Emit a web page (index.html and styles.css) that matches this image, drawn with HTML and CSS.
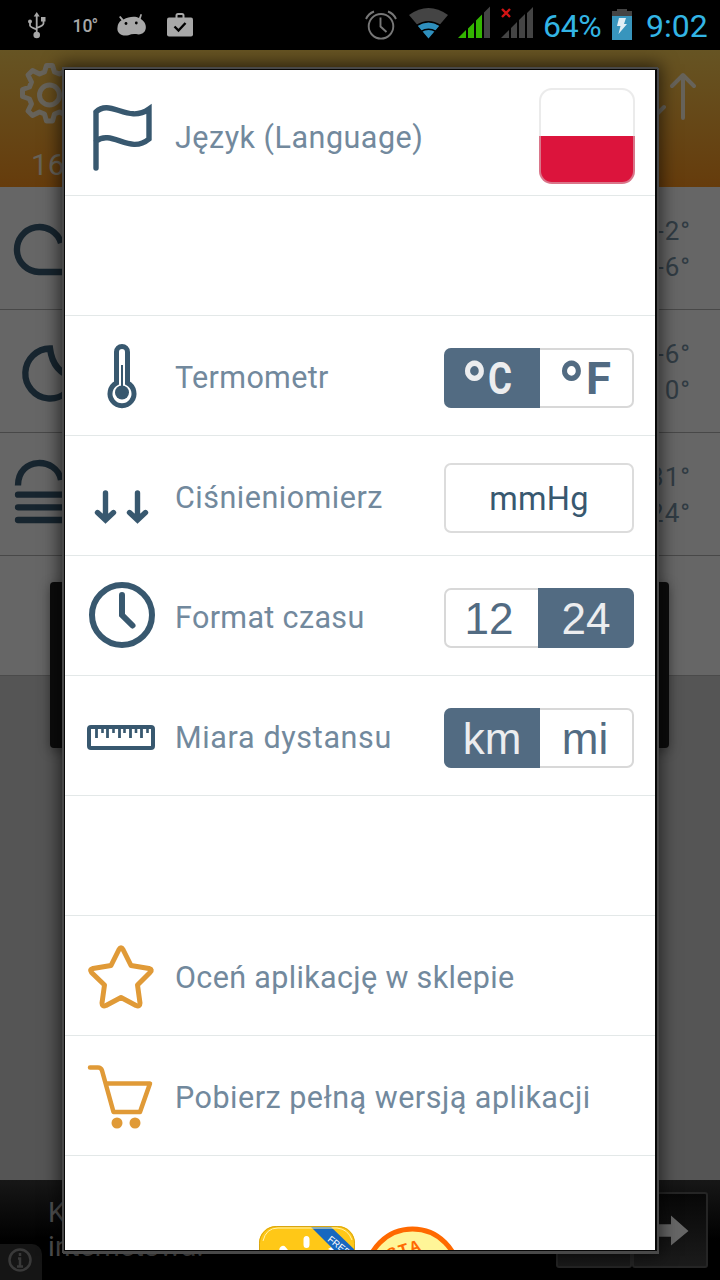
FILE: index.html
```html
<!DOCTYPE html>
<html lang="pl">
<head>
<meta charset="utf-8">
<title>Ustawienia</title>
<link rel="stylesheet" href="styles.css">
</head>
<body>
<div class="screen">
  <header class="status">
    <svg class="status-left" viewBox="0 0 220 50">
      <g fill="none" stroke="#a8a8a8" stroke-width="1.8">
        <path d="M36.700 16V35M30 22v3.500q0 1.500 6.700 4M43.500 20v3.500q0 2-6.800 4.500"/>
      </g>
      <g fill="#a8a8a8">
        <path d="M36.700 12l3 4.500h-6z"/><circle cx="36.700" cy="35" r="3.300"/><circle cx="30" cy="21.500" r="2"/><rect x="41" y="17" width="4.500" height="4.500"/>
        <text x="72.500" y="31.700" class="small-temp">10<tspan dx="-1">°</tspan></text>
        <path d="M119 17l1.500-1 3 3.500c5-3 12-3.500 15.500-1.500l1.500-4 1.500.6-1.300 4.500c7 3.500 7.500 15-2.200 15.500-4-.8-7-.6-10 .6-7 1.300-12-2-11-8 .3-3 1.500-5.500 4-7z"/>
        <rect x="167" y="17.500" width="26" height="19" rx="2"/>
      </g>
      <circle cx="126" cy="23.500" r="1.400"/><circle cx="136.300" cy="23" r="1.400"/>
      <path d="M176.500 18v-2.500q0-1.500 1.500-1.500h4q1.500 0 1.500 1.500V18" fill="none" stroke="#a8a8a8" stroke-width="2"/>
      <path d="M174.500 26.500l4 4 7-7.500" fill="none" stroke="#000" stroke-width="2.400"/>
    </svg>
    <div class="status-right">
      <svg class="signals" viewBox="360 0 180 50">
        <g fill="none" stroke="#777" stroke-width="1.900">
          <circle cx="381" cy="26.300" r="12.300"/><path d="M380.500 17.500v9l6 5.500M366 19q2.500-5.500 8-7.500M396 19q-2.500-5.500-8-7.500"/>
        </g>
        <path d="M409 15q19.500-14 39 0L428.500 38z" fill="#444"/>
        <path d="M417.500 25.500q11-7 22 0L428.500 38.500z" fill="#2e8fbd"/>
        <path d="M416.500 25.500q12-7.500 24 0M421 31.500q7.500-4.500 15 0" fill="none" stroke="#000" stroke-width="1.500"/>
        <g fill="#33b500"><path d="M458 38l8-8v8zM468 38V28.500l6-6V38zM476 38V20.500l6-6V38z"/></g>
        <g fill="#444"><path d="M484 38V12.500l6-6V38zM501 38l8-8v8zM511 38V28l6-6v16zM519 38V20l6-6v24zM527 38V13l6-6v31z"/></g>
        <path d="M502 9l8 8M510 9l-8 8" stroke="#d31414" stroke-width="2.400"/>
      </svg>
      <span class="battery-text">64%</span>
      <svg class="battery" viewBox="0 0 20 50">
        <path d="M0 11h5V9h10v2h5v5H0z" fill="#444"/><path d="M0 16h20v24H0z" fill="#3895bd"/>
        <path d="M7 18h7l-2 6h3L6.500 34l2-8H5z" fill="#e1eef4"/>
      </svg>
      <span class="clock">9:02</span>
    </div>
  </header>

  <main class="weather">
    <div class="toolbar">
      <div class="today">
        <svg class="gear" viewBox="20 61 61 64" fill="none" stroke="#67635a" stroke-width="5" stroke-linejoin="round">
          <circle cx="50.500" cy="94" r="10"/>
          <path d="M45.500 71l2-6.500h6l2 6.500 5 2 7-3.500 4.500 4.500-3.500 7 2 5 7 2.500v7l-7 2.500-2 5 3.500 7-4.500 4.500-7-3.500-5 2-2 7h-6l-2-7-5-2-7 3.500-4.500-4.500 3.500-7-2-5-7-2.500v-7l7-2.500 2-5-3.500-7 4.500-4.500 7 3.500z"/>
        </svg>
        <span class="hour">16</span>
      </div>
      <svg class="arrows" viewBox="640 70 60 60" fill="none" stroke="#67635a" stroke-width="4" stroke-linecap="round" stroke-linejoin="round"><path d="M683 118V76M672 86l11-11 11 11M653 76v42M642 107l11 11 11-11"/></svg>
    </div>
    <div class="day">
      <svg viewBox="0 186 90 122"><path d="M61 242A22.500 22.500 0 1 0 39 271H80"/></svg>
      <div class="temps"><span>-2°</span><span>-6°</span></div>
    </div>
    <div class="day">
      <svg viewBox="0 310 90 122"><path d="M50 348.500a25 25 0 1 0 25 29Q53 373 50 348.500z"/></svg>
      <div class="temps"><span>-6°</span><span>0°</span></div>
    </div>
    <div class="day">
      <svg viewBox="0 433 90 122"><path d="M18 485.500C18 456 57 457 61 480"/><path d="M18 494.700H80M18 507.300H80M18 520H80" stroke-linecap="round"/></svg>
      <div class="temps"><span>-31°</span><span>-24°</span></div>
    </div>
    <div class="blank"></div>
    <div class="remainder"></div>
    <footer class="ad">
      <div class="ad-text">K<br>internetowa!</div>
      <div class="ad-buttons"><span></span><span><svg viewBox="0 0 74 74"><path d="M8 31h30v-9l18 16-18 15v-9H8z" fill="#666"/></svg></span></div>
      <div class="info"><svg viewBox="0 0 26 26" fill="none" stroke="#393939" stroke-width="2.500"><circle cx="13" cy="13" r="10.500"/><path d="M13 6v3M11 11.500h2V19M10 19.500h6"/></svg></div>
    </footer>
  </main>

  <div class="backdrop-box"></div>

  <section class="dialog">
    <div class="row first">
      <svg class="icon" viewBox="65 70 110 125"><path d="M96 168V112M96 112C110 98 128 124 149 109V139C130 155 112 129 96 141" fill="none" stroke="#38586f" stroke-width="5.400" stroke-linecap="round"/></svg>
      <span class="label">Język (Language)</span><div class="flag"></div>
    </div>
    <div class="row"></div>
    <div class="row">
      <svg class="icon" viewBox="65 316 110 119"><path d="M116.500 383V352a5.500 5.500 0 0 1 11 0V383A12 12 0 1 1 116.500 383z" fill="none" stroke="#38586f" stroke-width="5"/><circle cx="122" cy="392.500" r="7" fill="#38586f"/><path d="M122 365v22" stroke="#38586f" stroke-width="2"/></svg>
      <span class="label tight">Termometr</span>
      <div class="toggle"><span class="on"><svg viewBox="0 0 96 60"><text class="deg" x="16.500" y="68" textLength="28" lengthAdjust="spacingAndGlyphs">°</text><text class="unit" x="44" y="46" textLength="24" lengthAdjust="spacingAndGlyphs">C</text></svg></span><span><svg viewBox="0 0 94 60"><text class="deg" x="17.500" y="68" textLength="28" lengthAdjust="spacingAndGlyphs">°</text><text class="unit" x="46" y="46" textLength="25" lengthAdjust="spacingAndGlyphs">F</text></svg></span></div>
    </div>
    <div class="row">
      <svg class="icon" viewBox="65 436 110 119"><path d="M105.500 493v27M97.500 512.500l8 7.500 8-7.500M137.500 493v27M129.500 512.500l8 7.500 8-7.500" fill="none" stroke="#38586f" stroke-width="5.400" stroke-linecap="round"/></svg>
      <span class="label">Ciśnieniomierz</span><div class="select">mmHg</div>
    </div>
    <div class="row">
      <svg class="icon" viewBox="65 556 110 119" fill="none" stroke="#38586f" stroke-width="6" stroke-linecap="round"><circle cx="122" cy="615" r="30"/><path d="M122 595v20l10.500 10.500"/></svg>
      <span class="label tight">Format czasu</span><div class="toggle"><span class="left">12</span><span class="on">24</span></div>
    </div>
    <div class="row">
      <svg class="icon" viewBox="65 676 110 119" fill="none" stroke="#38586f"><rect x="89" y="727" width="64" height="21" rx="2" stroke-width="4"/><path d="M96.500 728v10M107.500 728v10M119.500 728v10M130.500 728v10M141.500 728v10" stroke-width="2.800"/><path d="M102.500 728v5M113.500 728v5M124.500 728v5M136 728v5M147.500 728v5" stroke-width="2.600"/></svg>
      <span class="label wide">Miara dystansu</span><div class="toggle"><span class="on">km</span><span class="left">mi</span></div>
    </div>
    <div class="row"></div>
    <div class="row">
      <svg class="icon" viewBox="65 916 110 119"><path d="M119 949.500Q121 946 123 949.500L131 965.500 149 968.500Q153 969.500 150 972.500L137.500 985 140 1003Q140 1007 136 1005.500L121 997.500 106 1005.500Q102 1007 102 1003L104.500 985 91.500 972.500Q89 969.500 93 968.500L111 965.500z" fill="none" stroke="#e09a37" stroke-width="5" stroke-linejoin="round"/></svg>
      <span class="label tight">Oceń aplikację w sklepie</span>
    </div>
    <div class="row">
      <svg class="icon" viewBox="65 1036 110 119"><path d="M90 1067.500H98Q101 1067.500 102 1070.500L113.500 1112H140L150 1083.500H106.500" fill="none" stroke="#e09a37" stroke-width="4.500" stroke-linecap="round" stroke-linejoin="round"/><g fill="#e09a37"><circle cx="117" cy="1123" r="5.500"/><circle cx="135" cy="1123" r="5.500"/></g></svg>
      <span class="label">Pobierz pełną wersją aplikacji</span>
    </div>
    <div class="apps">
      <svg viewBox="259 1226 96 96">
        <defs><clipPath id="tile"><rect x="259" y="1226" width="96" height="96" rx="17"/></clipPath></defs>
        <g clip-path="url(#tile)"><rect x="259" y="1226" width="96" height="96" fill="#ffc817"/><path d="M303.500 1239.500q0-3.500 3-3.500t3 3.500v5q0 3.500-3 3.500t-3-3.500zM337 1253l-9-4 7-4z" fill="#fff"/><path d="M283 1249.500l5 6" stroke="#fff" stroke-width="7" stroke-linecap="round"/><path d="M310 1226h20l26 25v21z" fill="#1768c0"/></g>
        <rect x="259.500" y="1226.500" width="95" height="95" rx="17" fill="none" stroke="#d9a510"/><path d="M263 1241Q266 1228 278 1228H337Q348 1229 352 1240" fill="none" stroke="#fff2b0"/>
        <text class="free" transform="translate(327 1240.500) rotate(38)">FREE</text>
      </svg>
      <svg viewBox="364 1226 98 98"><circle cx="412.500" cy="1275" r="46" fill="#fff598" stroke="#ff6900" stroke-width="5"/><text class="stamp" transform="translate(389 1260) rotate(-17)">STA</text></svg>
    </div>
  </section>
</div>
</body>
</html>
```
FILE: styles.css
```css
* { box-sizing: border-box; }
body { margin: 0; font-family: Roboto, "Noto Sans", sans-serif; }
svg { display: block; }

.screen { position: relative; width: 720px; height: 1280px; overflow: hidden; background: #555; }

.status { height: 50px; display: flex; justify-content: space-between; background: #000; color: #33b5e5; }
.status-left { width: 220px; height: 50px; }
.small-temp { font-size: 17.500px; font-weight: 500; letter-spacing: 0; }
.status-right { display: flex; align-items: center; padding-right: 12px; }
.signals { width: 180px; height: 50px; }
.battery-text { width: 72px; padding: 1px 0 0 3px; font-size: 32px; letter-spacing: -.3px; }
.battery { width: 20px; height: 50px; margin-right: 14px; }
.clock { width: 62px; padding-top: 1px; font-size: 32px; letter-spacing: 0; white-space: nowrap; }

.toolbar { height: 137px; display: flex; justify-content: space-between; padding: 12px 20px 0 19px; background: linear-gradient(#665423, #663c0c); }
.today { display: flex; flex-direction: column; gap: 21px; }
.gear { width: 61px; height: 64px; }
.hour { padding-left: 12px; font-size: 30px; line-height: 36px; color: #67635a; letter-spacing: 0; }
.arrows { width: 60px; height: 60px; margin-top: 8px; }
.day { height: 123px; display: flex; justify-content: space-between; background: #666; border-bottom: 1px solid #484848; padding-right: 29px; }
.day svg { width: 90px; height: 122px; fill: none; stroke: #17252f; stroke-width: 6.300; }
.temps { display: flex; flex-direction: column; padding-top: 26px; text-align: right; color: #303b43; font-size: 26px; line-height: 36px; letter-spacing: 1px; }
.blank { height: 119px; background: #666; }
.remainder { height: 505px; background: #555; border-top: 1px solid #4b4b4b; }
.ad { position: relative; height: 101px; display: flex; justify-content: space-between; padding: 12px 12px 0 48px; background: linear-gradient(#171717, #000 60%); }
.ad-text { padding-top: 4px; font-size: 28px; line-height: 34px; letter-spacing: .1px; color: #505050; }
.ad-buttons { display: flex; }
.ad-buttons span { width: 76px; height: 76px; border: 2px solid #252525; border-radius: 3px; background: linear-gradient(#070707, #1b1b1b); }
.info { position: absolute; left: 0; bottom: 0; width: 42px; height: 37px; padding: 3px 0 0 7px; background: #151515; border-top-right-radius: 10px; }
.info svg { width: 26px; height: 26px; }

.backdrop-box { position: absolute; left: 50px; top: 582px; width: 619px; height: 166px; border-radius: 4px; background: #0c0c0c; box-shadow: 0 3px 12px rgba(0,0,0,.35); }

.dialog { position: absolute; left: 64px; top: 69px; width: 592px; height: 1182px; overflow: hidden; border: 1px solid #080808; background: #fff; box-shadow: 1px 0 0 #080808, 0 0 0 2px #484848, 1px 1px 0 2px #484848, 0 0 16px 5px rgba(0,0,0,.6); }
.row { height: 120px; display: flex; align-items: center; padding-right: 21px; border-bottom: 1px solid #e3e8e8; }
.first { height: 126px; padding-right: 20px; }
.icon { width: 110px; height: 119px; flex: none; }
.first .icon { height: 125px; }
.label { flex: 1; padding-top: 3px; color: #72899d; font-size: 30.500px; letter-spacing: .5px; white-space: nowrap; }
.first .label { padding-top: 10px; }
.tight { letter-spacing: .35px; }
.wide { letter-spacing: .65px; }
.flag { width: 96px; height: 96px; margin-top: 7px; border: 2px solid rgba(215,215,215,.5); border-radius: 13px; background: linear-gradient(#fff 50%, #dc143c 50%) border-box; }
.toggle { width: 190px; height: 60px; margin-top: 5px; display: flex; overflow: hidden; border-radius: 7px; box-shadow: inset 0 0 0 2px #d8d8d8; color: #526b82; font: 44px/62px "Liberation Sans", Arial, sans-serif; text-align: center; }
.toggle span { flex: 1; }
.toggle .on { flex: none; width: 96px; background: #526b82; color: #ecedef; }
.toggle .left { padding-right: 4px; }
.toggle svg { width: 100%; height: 60px; overflow: visible; }
.deg { font: bold 76px Roboto, sans-serif; fill: currentColor; }
.unit { font: bold 44px Roboto, sans-serif; fill: currentColor; }
.select { width: 190px; height: 70px; margin-top: 5px; border: 2px solid #dcdcdc; border-radius: 7px; color: #38586f; font: 32.500px/68px Roboto, sans-serif; letter-spacing: .3px; text-align: center; }
.apps { display: flex; justify-content: center; gap: 9px; padding: 70px 0 0 1px; }
.apps svg { width: 96px; height: 96px; flex: none; }
.apps svg + svg { width: 98px; height: 98px; }
.free { font: 9.500px "Liberation Sans", sans-serif; fill: #fff; }
.stamp { font: bold 17px "Liberation Mono", monospace; letter-spacing: 1.500px; fill: #ff6900; }
```
